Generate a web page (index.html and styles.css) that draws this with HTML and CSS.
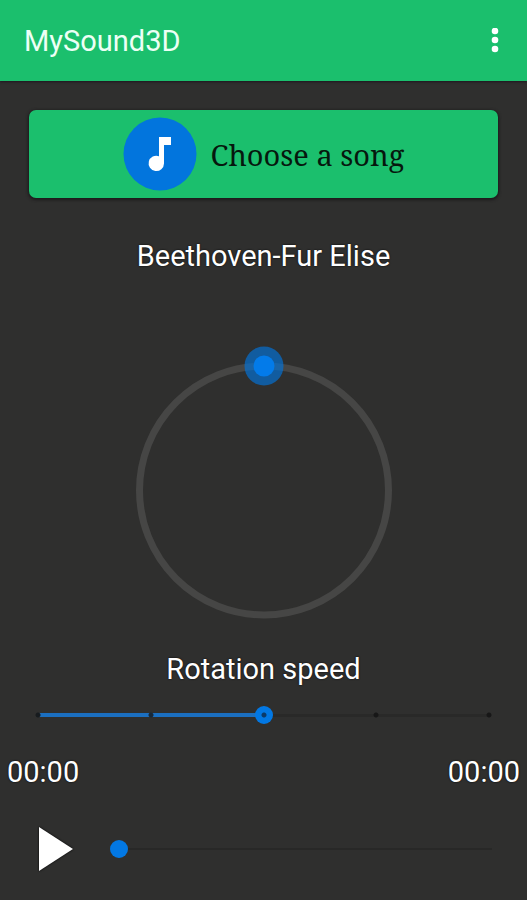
FILE: index.html
```html
<!DOCTYPE html>
<html lang="en">
<head>
    <meta charset="utf-8">
    <meta name="viewport" content="width=device-width, initial-scale=1">
    <title>MySound3D</title>
    <link rel="stylesheet" href="styles.css">
</head>
<body>
    <header class="toolbar">
        <h1 class="title">MySound3D</h1>
        <button class="menu" type="button" aria-label="More options">
            <svg width="8" height="26" viewBox="0 0 8 26" fill="#fff">
                <circle cx="4" cy="3" r="3.3"/>
                <circle cx="4" cy="12" r="3.3"/>
                <circle cx="4" cy="21" r="3.3"/>
            </svg>
        </button>
    </header>

    <main class="player">
        <button class="choose" type="button">
            <svg width="74" height="74" viewBox="0 0 74 74">
                <circle cx="37" cy="37" r="36.5" fill="#0275dd"/>
                <path d="M36 20h12v8h-7v18.500a7.700 7.700 0 1 1-5-7.300z" fill="#fff"/>
            </svg>
            <span>Choose a song</span>
        </button>

        <h2 class="label song">Beethoven-Fur Elise</h2>

        <svg class="dial" width="258" height="274" viewBox="0 0 258 274">
            <circle cx="129" cy="144.500" r="124.500" fill="none" stroke="#464645" stroke-width="7"/>
            <circle cx="129" cy="20" r="19.500" fill="#0275dd" fill-opacity="0.650"/>
            <circle cx="129" cy="20" r="10.500" fill="#037bea"/>
        </svg>

        <label class="label" for="speed">Rotation speed</label>
        <input class="slider speed" type="range" id="speed" min="0" max="4" value="2">

        <div class="times">
            <span class="label">00:00</span>
            <span class="label">00:00</span>
        </div>

        <div class="controls">
            <button class="play" type="button" aria-label="Play">
                <svg width="34" height="44" viewBox="0 0 34 44">
                    <path d="M0 0l34 22-34 22z" fill="#fff"/>
                </svg>
            </button>
            <input class="slider seek" type="range" min="0" max="100" value="0" aria-label="Song position">
        </div>
    </main>
</body>
</html>
```
FILE: styles.css
```css
* {
    box-sizing: border-box;
}

body {
    margin: 0;
    min-height: 100vh;
    background-color: #2f2f2e;
    color: white;
    font-family: Roboto, "Liberation Sans", sans-serif;
}

button {
    border: none;
    padding: 0;
    background: none;
    cursor: pointer;
}

svg {
    display: block;
}

.toolbar {
    display: flex;
    align-items: center;
    justify-content: space-between;
    height: 81px;
    padding: 0 24px;
    background-color: #1bbf6d;
    box-shadow: 0 1px 2px #1c1720;
}

.title {
    margin: 0;
    font-size: 29px;
    font-weight: normal;
    color: #edfff5;
}

.menu {
    padding: 0 4px;
}

.player {
    display: flex;
    flex-direction: column;
    align-items: center;
    padding-top: 29px;
}

.choose {
    display: flex;
    align-items: center;
    justify-content: center;
    gap: 14px;
    align-self: stretch;
    height: 88px;
    margin: 0 29px;
    border-radius: 7px;
    background-color: #1bbf6d;
    box-shadow: 0 1px 3px 1px #1c1a1c;
    color: #06180e;
    font-family: "Noto Serif", "Droid Serif", "DejaVu Serif Condensed", "DejaVu Serif", serif;
    font-size: 29px;
}

.label {
    margin: 0;
    font-size: 29px;
    font-weight: normal;
    line-height: 36px;
    text-shadow: 0 0 2px #000;
}

.song {
    margin-top: 40px;
}

.dial {
    margin: 72px 0 31px;
}

.slider {
    -webkit-appearance: none;
    appearance: none;
    height: 18px;
    margin: 0;
    background: none;
}

.slider::-webkit-slider-runnable-track {
    height: 18px;
    background-repeat: no-repeat;
}

.slider::-webkit-slider-thumb {
    -webkit-appearance: none;
    width: 18px;
    height: 18px;
    border-radius: 50%;
    background: #0278e4;
}

.speed {
    align-self: stretch;
    margin: 19px 29px 30px;
}

/* four tick marks, the filled half, then the thin line */
.speed::-webkit-slider-runnable-track {
    background-image:
        radial-gradient(circle, #171b1e 2px, transparent 3px),
        radial-gradient(circle, #172838 2px, transparent 3px),
        radial-gradient(circle, #171717 2px, transparent 3px),
        radial-gradient(circle, #171717 2px, transparent 3px),
        linear-gradient(#1b6fc0, #1b6fc0),
        linear-gradient(#292928, #292928);
    background-size: 18px 18px, 18px 18px, 18px 18px, 18px 18px, calc(50% - 9px) 4px, calc(100% - 18px) 3px;
    background-position: 0 0, 25% 0, 75% 0, 100% 0, 9px 7px, 9px 8px;
}

.speed::-webkit-slider-thumb {
    background: radial-gradient(circle, #0b3a69 2px, #0278e4 3px);
}

.times {
    display: flex;
    justify-content: space-between;
    align-self: stretch;
    padding: 0 7px;
}

.controls {
    display: flex;
    align-items: center;
    gap: 37px;
    align-self: stretch;
    margin-top: 37px;
    padding: 0 26px 0 39px;
}

.play svg {
    filter: drop-shadow(0 0 1px #000);
}

.seek {
    flex: 1;
}

.seek::-webkit-slider-runnable-track {
    background-image: linear-gradient(#282827, #282827);
    background-size: calc(100% - 18px) 2px;
    background-position: 9px 8px;
}
```
